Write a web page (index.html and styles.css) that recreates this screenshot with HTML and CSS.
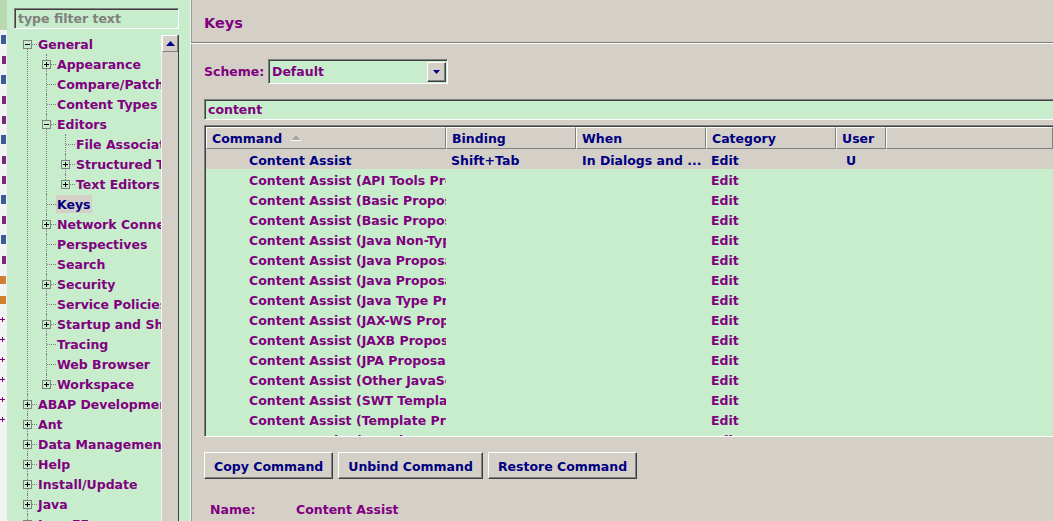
FILE: index.html
```html
<!DOCTYPE html>
<html lang="en">
<head>
  <meta charset="UTF-8">
  <title>Preferences - Keys</title>
  <link rel="stylesheet" href="styles.css">
</head>
<body>
<div class="window">
  <!-- sliver of the window behind -->
  <div class="behind">
    <div class="b-top"></div>
    <div class="b-bit blue"></div>
    <div class="b-bit"></div>
    <div class="b-bit blue"></div>
    <div class="b-bit"></div>
    <div class="b-bit"></div>
    <div class="b-bit blue"></div>
    <div class="b-bit"></div>
    <div class="b-bit"></div>
    <div class="b-bit blue"></div>
    <div class="b-bit"></div>
    <div class="b-bit blue"></div>
    <div class="b-bit"></div>
    <div class="b-bit orange"></div>
    <div class="b-bit orange"></div>
    <div class="b-plus"></div>
    <div class="b-plus"></div>
    <div class="b-plus"></div>
    <div class="b-plus"></div>
    <div class="b-plus"></div>
    <div class="b-plus"></div>
  </div>

  <!-- preference tree -->
  <aside class="nav">
    <div class="filter">type filter text</div>
    <div class="tree-wrap">
      <div class="tree-box">
        <ul class="tree">
          <li>
            <div class="row"><span class="tog"><i class="box"></i></span><span class="lbl">General</span></div>
            <ul>
              <li><div class="row"><span class="tog"><i class="box plus"></i></span><span class="lbl">Appearance</span></div></li>
              <li><div class="row"><span class="tog"></span><span class="lbl">Compare/Patch</span></div></li>
              <li><div class="row"><span class="tog"></span><span class="lbl">Content Types</span></div></li>
              <li>
                <div class="row"><span class="tog"><i class="box"></i></span><span class="lbl">Editors</span></div>
                <ul>
                  <li><div class="row"><span class="tog"></span><span class="lbl">File Associations</span></div></li>
                  <li><div class="row"><span class="tog"><i class="box plus"></i></span><span class="lbl">Structured Text Editors</span></div></li>
                  <li><div class="row"><span class="tog"><i class="box plus"></i></span><span class="lbl">Text Editors</span></div></li>
                </ul>
              </li>
              <li><div class="row"><span class="tog"></span><span class="lbl sel">Keys</span></div></li>
              <li><div class="row"><span class="tog"><i class="box plus"></i></span><span class="lbl">Network Connections</span></div></li>
              <li><div class="row"><span class="tog"></span><span class="lbl">Perspectives</span></div></li>
              <li><div class="row"><span class="tog"></span><span class="lbl">Search</span></div></li>
              <li><div class="row"><span class="tog"><i class="box plus"></i></span><span class="lbl">Security</span></div></li>
              <li><div class="row"><span class="tog"></span><span class="lbl">Service Policies</span></div></li>
              <li><div class="row"><span class="tog"><i class="box plus"></i></span><span class="lbl">Startup and Shutdown</span></div></li>
              <li><div class="row"><span class="tog"></span><span class="lbl">Tracing</span></div></li>
              <li><div class="row"><span class="tog"></span><span class="lbl">Web Browser</span></div></li>
              <li><div class="row"><span class="tog"><i class="box plus"></i></span><span class="lbl">Workspace</span></div></li>
            </ul>
          </li>
          <li><div class="row"><span class="tog"><i class="box plus"></i></span><span class="lbl">ABAP Development</span></div></li>
          <li><div class="row"><span class="tog"><i class="box plus"></i></span><span class="lbl">Ant</span></div></li>
          <li><div class="row"><span class="tog"><i class="box plus"></i></span><span class="lbl">Data Management</span></div></li>
          <li><div class="row"><span class="tog"><i class="box plus"></i></span><span class="lbl">Help</span></div></li>
          <li><div class="row"><span class="tog"><i class="box plus"></i></span><span class="lbl">Install/Update</span></div></li>
          <li><div class="row"><span class="tog"><i class="box plus"></i></span><span class="lbl">Java</span></div></li>
          <li><div class="row"><span class="tog"><i class="box plus"></i></span><span class="lbl">Java EE</span></div></li>
          <li><div class="row"><span class="tog"><i class="box plus"></i></span><span class="lbl">JavaScript</span></div></li>
        </ul>
      </div>
      <div class="vscroll">
        <div class="sb-btn">
          <svg width="9" height="5" viewBox="0 0 9 5"><path d="M4.5 0L9 5H0z" fill="#000080"/></svg>
        </div>
        <div class="sb-track"></div>
      </div>
    </div>
  </aside>

  <!-- Keys page -->
  <main class="page">
    <div class="title">Keys</div>
    <div class="body">
      <div class="scheme">
        <span class="scheme-lbl">Scheme:</span>
        <div class="combo">
          <span class="combo-val">Default</span>
          <span class="drop">
            <svg width="7" height="4" viewBox="0 0 7 4"><path d="M0 0H7L3.5 4z" fill="#000080"/></svg>
          </span>
        </div>
      </div>

      <div class="search">content</div>

      <div class="table-box">
        <div class="head">
          <div class="th">Command
            <svg class="sort" width="10" height="6" viewBox="0 0 10 6"><path d="M5 0L10 6H0z" fill="#a9a6a0"/><path d="M0 5.5H10" stroke="#fff"/></svg>
          </div>
          <div class="th">Binding</div>
          <div class="th">When</div>
          <div class="th">Category</div>
          <div class="th">User</div>
          <div class="th"></div>
        </div>
        <div class="tr sel">
          <div class="td cmd">Content Assist</div>
          <div class="td">Shift+Tab</div>
          <div class="td when">In Dialogs and ...</div>
          <div class="td">Edit</div>
          <div class="td user">U</div>
          <div class="td"></div>
        </div>
        <div class="tr"><div class="td cmd">Content Assist (API Tools Proposals)</div><div class="td"></div><div class="td"></div><div class="td">Edit</div><div class="td"></div><div class="td"></div></div>
        <div class="tr"><div class="td cmd">Content Assist (Basic Proposals)</div><div class="td"></div><div class="td"></div><div class="td">Edit</div><div class="td"></div><div class="td"></div></div>
        <div class="tr"><div class="td cmd">Content Assist (Basic Proposals)</div><div class="td"></div><div class="td"></div><div class="td">Edit</div><div class="td"></div><div class="td"></div></div>
        <div class="tr"><div class="td cmd">Content Assist (Java Non-Type Proposals)</div><div class="td"></div><div class="td"></div><div class="td">Edit</div><div class="td"></div><div class="td"></div></div>
        <div class="tr"><div class="td cmd">Content Assist (Java Proposals)</div><div class="td"></div><div class="td"></div><div class="td">Edit</div><div class="td"></div><div class="td"></div></div>
        <div class="tr"><div class="td cmd">Content Assist (Java Proposals)</div><div class="td"></div><div class="td"></div><div class="td">Edit</div><div class="td"></div><div class="td"></div></div>
        <div class="tr"><div class="td cmd">Content Assist (Java Type Proposals)</div><div class="td"></div><div class="td"></div><div class="td">Edit</div><div class="td"></div><div class="td"></div></div>
        <div class="tr"><div class="td cmd">Content Assist (JAX-WS Proposals)</div><div class="td"></div><div class="td"></div><div class="td">Edit</div><div class="td"></div><div class="td"></div></div>
        <div class="tr"><div class="td cmd">Content Assist (JAXB Proposals)</div><div class="td"></div><div class="td"></div><div class="td">Edit</div><div class="td"></div><div class="td"></div></div>
        <div class="tr"><div class="td cmd">Content Assist (JPA Proposals)</div><div class="td"></div><div class="td"></div><div class="td">Edit</div><div class="td"></div><div class="td"></div></div>
        <div class="tr"><div class="td cmd">Content Assist (Other JavaScript Proposals)</div><div class="td"></div><div class="td"></div><div class="td">Edit</div><div class="td"></div><div class="td"></div></div>
        <div class="tr"><div class="td cmd">Content Assist (SWT Template Proposals)</div><div class="td"></div><div class="td"></div><div class="td">Edit</div><div class="td"></div><div class="td"></div></div>
        <div class="tr"><div class="td cmd">Content Assist (Template Proposals)</div><div class="td"></div><div class="td"></div><div class="td">Edit</div><div class="td"></div><div class="td"></div></div>
        <div class="tr"><div class="td cmd">Content Assist (Template Proposals)</div><div class="td"></div><div class="td"></div><div class="td">Edit</div><div class="td"></div><div class="td"></div></div>
      </div>

      <div class="buttons">
        <button class="btn">Copy Command</button>
        <button class="btn">Unbind Command</button>
        <button class="btn">Restore Command</button>
      </div>

      <div class="name">
        <span class="name-lbl">Name:</span>
        <span>Content Assist</span>
      </div>
    </div>
  </main>
</div>
</body>
</html>
```

FILE: styles.css
```css
body {
  margin: 0;
  font: bold 12.5px "DejaVu Sans", Verdana, sans-serif;
  background-color: #d4d0c8;
  color: #800080;
}
.window {
  display: flex;
  height: 521px;
  overflow: hidden;
}

/* window behind */
.behind {
  width: 7px;
  flex: none;
  background-color: #f3f3f3;
  overflow: hidden;
}
.b-top {
  height: 30px;
  background-color: #b8d8b0;
}
.b-bit {
  height: 20px;
  background: linear-gradient(#7a2a7a, #7a2a7a) 2px 6px / 4px 8px no-repeat;
}
.b-bit.blue {
  background: linear-gradient(#3a5a9a, #3a5a9a) 1px 5px / 5px 9px no-repeat;
}
.b-bit.orange {
  background: linear-gradient(#d08030, #d08030) 0 6px / 6px 8px no-repeat;
}
.b-plus {
  height: 20px;
  background: linear-gradient(#800080, #800080) 0 9px / 5px 1px no-repeat,
              linear-gradient(#800080, #800080) 2px 7px / 1px 5px no-repeat;
}

/* preference tree */
.nav {
  width: 183px;
  flex: none;
  box-sizing: border-box;
  background-color: #c7edcc;
  padding: 8px 11px 0 7px;
  display: flex;
  flex-direction: column;
}
.filter {
  height: 21px;
  box-sizing: border-box;
  border: 1px solid;
  border-color: #808080 #fff #fff #808080;
  box-shadow: inset 1px 1px #404040;
  color: #808080;
  padding: 1px 0 0 3px;
  line-height: 18px;
  white-space: nowrap;
  overflow: hidden;
}
.tree-wrap {
  margin-top: 5px;
  flex: 1;
  display: flex;
  min-height: 0;
}
.tree-box {
  flex: 1;
  min-width: 0;
  overflow: hidden;
}
.tree {
  margin: 0;
  padding: 0 0 0 5px;
  list-style: none;
  white-space: nowrap;
}
.tree ul {
  margin: 0;
  padding-left: 19px;
  list-style: none;
}
.tree li {
  position: relative;
}
.tree li::before {
  content: "";
  position: absolute;
  left: 8px;
  top: 0;
  bottom: 0;
  border-left: 1px dotted #808080;
}
.tree li:last-child::before {
  bottom: auto;
  height: 10px;
}
.tree > li:first-child::before {
  top: 10px;
}
.row {
  display: flex;
  align-items: center;
  height: 20px;
}
.tog {
  flex: none;
  width: 19px;
  height: 20px;
  position: relative;
  box-sizing: border-box;
  padding: 6px 0 0 4px;
}
.tog::after {
  content: "";
  position: absolute;
  left: 9px;
  right: 1px;
  top: 10px;
  border-top: 1px dotted #808080;
}
.box {
  display: block;
  position: relative;
  z-index: 1;
  width: 9px;
  height: 9px;
  box-sizing: border-box;
  border: 1px solid #808080;
  background: linear-gradient(#000, #000) 1px 3px / 5px 1px no-repeat, #c7edcc;
}
.box.plus {
  background: linear-gradient(#000, #000) 1px 3px / 5px 1px no-repeat,
              linear-gradient(#000, #000) 3px 1px / 1px 5px no-repeat, #c7edcc;
}
.lbl {
  padding: 1px 1px 0;
  margin-left: -1px;
  line-height: 17px;
}
.lbl.sel {
  background-color: #d4d0c8;
  color: #000080;
}
.vscroll {
  width: 18px;
  flex: none;
  margin-top: 1px;
  display: flex;
  flex-direction: column;
  background-color: #d4d0c8;
  border-left: 1px solid #f4f4f4;
  border-right: 1px solid #404040;
  box-sizing: border-box;
}
.sb-btn {
  height: 17px;
  box-sizing: border-box;
  border: 1px solid;
  border-color: #fff #808080 #808080 #fff;
  display: flex;
  align-items: center;
  justify-content: center;
}
.sb-track {
  flex: 1;
}

/* keys page */
.page {
  flex: 1;
  min-width: 0;
  border-left: 1px solid #f4f4f4;
  box-shadow: inset 1px 0 #9a9890;
  overflow: hidden;
}
.title {
  height: 43px;
  box-sizing: border-box;
  padding: 4px 0 0 13px;
  display: flex;
  align-items: center;
  font-size: 14.5px;
  border-bottom: 1px solid #808080;
  box-shadow: 0 1px #fff;
}
.body {
  padding: 16px 0 0 13px;
  display: flex;
  flex-direction: column;
}
.scheme {
  display: flex;
  align-items: center;
  gap: 5px;
  height: 25px;
}
.scheme-lbl {
  width: 59px;
}
.combo {
  width: 180px;
  height: 25px;
  box-sizing: border-box;
  border: 1px solid;
  border-color: #808080 #fff #fff #808080;
  box-shadow: inset 1px 1px #404040;
  background-color: #c7edcc;
  display: flex;
  align-items: center;
  padding: 0 1px 0 3px;
}
.combo-val {
  flex: 1;
}
.drop {
  width: 19px;
  height: 20px;
  box-sizing: border-box;
  border: 1px solid;
  border-color: #fff #404040 #404040 #fff;
  box-shadow: inset -1px -1px #808080;
  background-color: #d4d0c8;
  display: flex;
  align-items: center;
  justify-content: center;
}
.search {
  margin-top: 15px;
  height: 21px;
  box-sizing: border-box;
  border: 1px solid;
  border-color: #808080 #fff #fff #808080;
  border-right: none;
  box-shadow: inset 1px 1px #404040;
  background-color: #c7edcc;
  padding: 1px 0 0 3px;
  line-height: 18px;
}

/* key binding table */
.table-box {
  margin-top: 5px;
  height: 312px;
  box-sizing: border-box;
  border: 1px solid;
  border-color: #808080 #fff #fff #808080;
  border-right: none;
  box-shadow: inset 1px 1px #404040;
  padding: 1px 0 0 1px;
  background-color: #c7edcc;
  overflow: hidden;
}
.head,
.tr {
  display: grid;
  grid-template-columns: 240px 130px 130px 130px 50px 1fr;
}
.th {
  height: 22px;
  box-sizing: border-box;
  padding: 1px 0 0 5px;
  display: flex;
  align-items: center;
  gap: 9px;
  background-color: #d4d0c8;
  color: #000080;
  border: 1px solid;
  border-color: #fff #808080 #808080 #fff;
  white-space: nowrap;
  overflow: hidden;
}
.sort {
  margin-top: -1px;
}
.tr {
  height: 20px;
  overflow: hidden;
}
.tr.sel {
  background-color: #d4d0c8;
  color: #000080;
}
.td {
  line-height: 20px;
  padding: 2px 0 0 5px;
  white-space: nowrap;
  overflow: hidden;
}
.td.cmd {
  padding-left: 43px;
}
.td.when {
  padding-left: 6px;
}
.td.user {
  padding-left: 10px;
}

.buttons {
  margin-top: 15px;
  display: flex;
  gap: 5px;
}
.btn {
  height: 27px;
  padding: 1px 9px 0;
  font: inherit;
  color: #000080;
  background-color: #d4d0c8;
  border: 1px solid;
  border-color: #fff #404040 #404040 #fff;
  box-shadow: inset -1px -1px #808080;
}
.name {
  margin-top: 21px;
  height: 18px;
  display: flex;
  align-items: center;
  padding-left: 6px;
}
.name-lbl {
  width: 86px;
}
```
